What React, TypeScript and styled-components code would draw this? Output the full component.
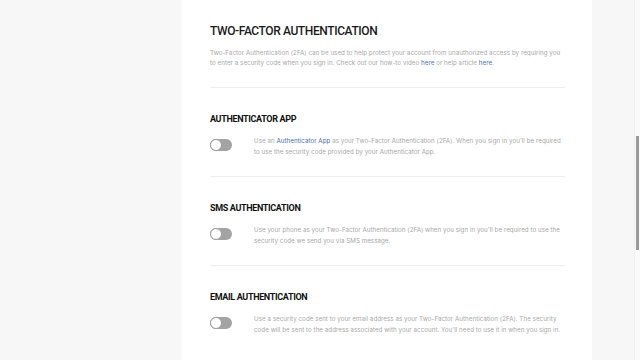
import React from 'react';
import styled, { createGlobalStyle } from 'styled-components';

const GlobalStyle = createGlobalStyle`
    html, body {
        margin: 0;
        padding: 0;
        background: #f7f7f7;
        font-family: Inter, "Noto Sans", sans-serif;
        overflow: hidden;
    }
`

const Page = styled.div`
    display: flex;
    padding-left: 182px;
    height: 360px;
`

const Panel = styled.main`
    width: 410px;
    background: #ffffff;
    padding: 22px 27px 0 28px;
    box-sizing: border-box;
`

const Title = styled.h1`
    margin: 0;
    font-family: Roboto, sans-serif;
    font-size: 12px;
    line-height: 18px;
    font-weight: 500;
    color: #1a1a1a;
    letter-spacing: -0.4px;
`

const Intro = styled.p`
    margin: 8px 0 0;
    font-size: 6.2px;
    line-height: 10px;
    letter-spacing: 0.05px;
    white-space: nowrap;
    color: #a8a8a8;
    padding-bottom: 19px;
    border-bottom: 1px solid #eeeeee;
`

const Link = styled.a`
    color: #4470b0;
    text-decoration: none;
`

const Section = styled.section<{ $last?: boolean }>`
    padding: 25px 0 19px;
    border-bottom: ${p => (p.$last ? 'none' : '1px solid #eeeeee')};
`

const Heading = styled.h2`
    margin: 0;
    font-family: Roboto, sans-serif;
    font-size: 9px;
    line-height: 12px;
    font-weight: 700;
    color: #111111;
    letter-spacing: -0.35px;
`

const Row = styled.div`
    display: flex;
    align-items: flex-start;
    margin-top: 10px;
`

const Toggle = styled.span`
    flex: none;
    position: relative;
    width: 22px;
    height: 12px;
    margin-top: 4px;
    border-radius: 6px;
    background: #a3a3a3;
    box-sizing: border-box;

    &::after {
        content: '';
        position: absolute;
        left: 0;
        top: 0;
        width: 12px;
        height: 12px;
        border-radius: 50%;
        background: #ffffff;
        border: 1px solid #9c9c9c;
        box-sizing: border-box;
    }
`

const Description = styled.p`
    margin: 0 0 0 22px;
    font-size: 6.2px;
    line-height: 11px;
    letter-spacing: 0.05px;
    white-space: nowrap;
    color: #a8a8a8;
`

const ScrollTrack = styled.div`
    position: fixed;
    top: 0;
    right: 0;
    width: 5px;
    height: 360px;
    background: #fafafa;
    border-left: 1px solid #f0f0f0;
`

const ScrollThumb = styled.div`
    position: absolute;
    top: 136px;
    left: 1px;
    width: 3px;
    height: 114px;
    background: #9a9a9a;
`

const methods = [
    {
        title: 'AUTHENTICATOR APP',
        text: (
            <>
                Use an <Link href="#">Authenticator App</Link> as your Two-Factor Authentication (2FA). When you sign in you'll be required<br />
                to use the security code provided by your Authenticator App.
            </>
        ),
    },
    {
        title: 'SMS AUTHENTICATION',
        text: (
            <>
                Use your phone as your Two-Factor Authentication (2FA) when you sign in you'll be required to use the<br />
                security code we send you via SMS message.
            </>
        ),
    },
    {
        title: 'EMAIL AUTHENTICATION',
        text: (
            <>
                Use a security code sent to your email address as your Two-Factor Authentication (2FA). The security<br />
                code will be sent to the address associated with your account. You'll need to use it in when you sign in.
            </>
        ),
    },
];

const App: React.FC = () => {
    return (
        <>
            <GlobalStyle />
            <Page>
                <Panel>
                    <Title>TWO-FACTOR AUTHENTICATION</Title>
                    <Intro>
                        Two-Factor Authentication (2FA) can be used to help protect your account from unauthorized access by requiring you<br />
                        to enter a security code when you sign in. Check out our how-to video <Link href="#">here</Link> or help article <Link href="#">here</Link>.
                    </Intro>

                    {methods.map((m, i) => (
                        <Section key={m.title} $last={i === methods.length - 1}>
                            <Heading>{m.title}</Heading>
                            <Row>
                                <Toggle />
                                <Description>{m.text}</Description>
                            </Row>
                        </Section>
                    ))}
                </Panel>
            </Page>
            <ScrollTrack>
                <ScrollThumb />
            </ScrollTrack>
        </>
    );
}

export default App;
